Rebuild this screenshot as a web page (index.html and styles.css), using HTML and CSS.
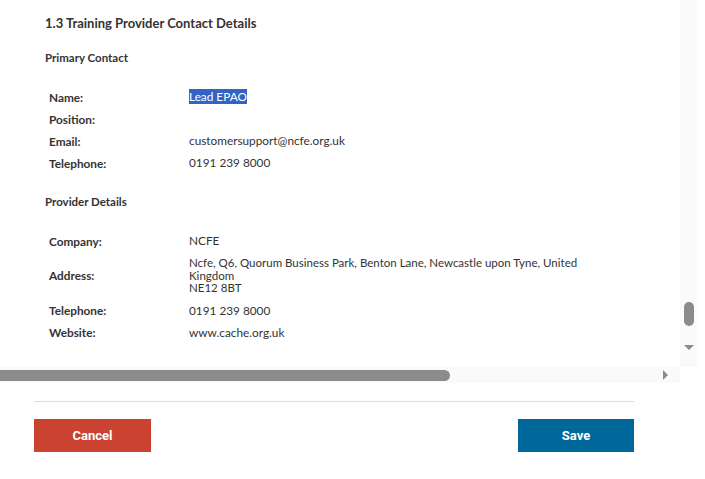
FILE: index.html
```html
<!DOCTYPE html>
<html>
<head>
<meta charset="utf-8">
<link rel="stylesheet" href="styles.css">
</head>
<body>
<div class="frame">
  <div class="viewport">
    <div class="content">
      <h2 class="title">1.3 Training Provider Contact Details</h2>
      <h3 class="sub">Primary Contact</h3>
      <table class="details">
        <tr><th>Name:</th><td><span class="sel">Lead EPAO</span></td></tr>
        <tr><th>Position:</th><td></td></tr>
        <tr><th>Email:</th><td>customersupport@ncfe.org.uk</td></tr>
        <tr><th>Telephone:</th><td>0191 239 8000</td></tr>
      </table>
      <h3 class="sub">Provider Details</h3>
      <table class="details">
        <tr><th>Company:</th><td>NCFE</td></tr>
        <tr><th>Address:</th><td class="addr">Ncfe, Q6, Quorum Business Park, Benton Lane, Newcastle upon Tyne, United Kingdom<br>NE12 8BT</td></tr>
        <tr><th>Telephone:</th><td>0191 239 8000</td></tr>
        <tr><th>Website:</th><td>www.cache.org.uk</td></tr>
      </table>
      <h3 class="sub">Apprenticeship Details and Employer Details</h3>
    </div>
    <div class="vbar">
      <div class="vspace"></div>
      <div class="vthumb"></div>
      <div class="varrow"></div>
    </div>
  </div>
  <div class="hbar">
    <div class="hthumb"></div>
    <div class="harrow"></div>
  </div>
</div>
<div class="footer">
  <div class="rule"></div>
  <div class="actions">
    <button class="btn cancel">Cancel</button>
    <button class="btn save">Save</button>
  </div>
</div>
</body>
</html>
```
FILE: styles.css
```css
html, body { margin: 0; padding: 0; background: #fff; }
body { width: 705px; height: 479px; overflow: hidden; font-family: Lato, "Open Sans", sans-serif; color: #333; }
.frame { width: 697px; }
.viewport { display: flex; height: 367px; overflow: hidden; }
.content { flex: 1; padding: 14px 0 0 45px; }
.title { margin: 0; font-size: 13px; font-weight: 700; color: #333; line-height: 18px; }
.sub { margin: 18px 0 0; font-size: 11.5px; font-weight: 700; line-height: 16px; color: #333; }
.details { border-collapse: collapse; margin: 20px 0 20px 0; font-size: 11.8px; }
.details th { text-align: left; font-weight: 700; width: 132px; padding: 3px 4px; height: 16px; vertical-align: middle; }
.details td { font-weight: 400; width: 400px; padding: 3px 4px; color: #333; line-height: 16px; }
.details td.addr { font-size: 11.5px; line-height: 12.5px; padding: 5px 4px; }
.sel { background: #3264c8; color: #fff; }
.vbar { width: 17px; background: #fafafa; display: flex; flex-direction: column; align-items: center; }
.vspace { height: 302px; }
.vthumb { width: 10px; height: 24px; border-radius: 5px; background: #8b8b8b; }
.varrow { margin-top: 19px; width: 0; height: 0; border-left: 5px solid transparent; border-right: 5px solid transparent; border-top: 5px solid #8b8b8b; }
.hbar { height: 16px; background: #fafafa; display: flex; align-items: center; width: 680px; }
.hthumb { width: 450px; height: 11px; background: #8b8b8b; border-radius: 0 6px 6px 0; }
.harrow { margin-left: 213px; width: 0; height: 0; border-top: 5px solid transparent; border-bottom: 5px solid transparent; border-left: 5px solid #8b8b8b; }
.footer { padding: 0 71px 0 34px; }
.rule { margin-top: 18px; height: 1px; background: #dcdcdc; }
.actions { display: flex; justify-content: space-between; margin-top: 17px; }
.btn { border: 0; height: 33px; width: 117px; color: #fff; font-family: "Liberation Sans Narrow", Roboto, sans-serif; font-size: 13px; font-weight: 700; padding: 0; }
.cancel { background: #cc4230; }
.save { background: #00679b; width: 116px; }
```
